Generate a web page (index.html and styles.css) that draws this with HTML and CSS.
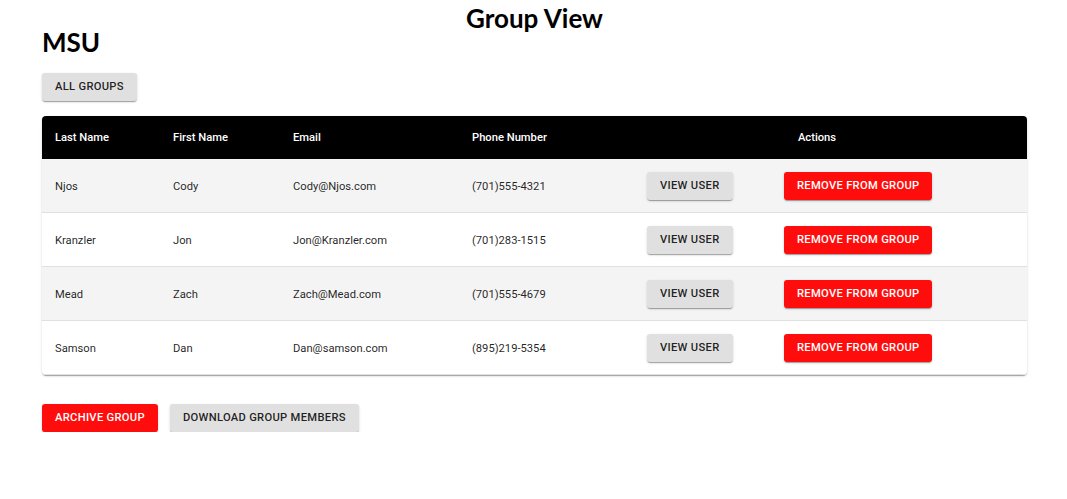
FILE: index.html
```html
<!DOCTYPE html>
<html lang="en">
<head>
<meta charset="utf-8">
<title>Group View</title>
<link rel="stylesheet" href="styles.css">
</head>
<body>
<div class="page">
  <h1 class="page-title">Group View</h1>
  <h1 class="group-name">MSU</h1>
  <div class="top-actions">
    <button class="btn btn-grey">All Groups</button>
  </div>
  <div class="paper">
    <table class="members">
      <colgroup>
        <col class="c-last">
        <col class="c-first">
        <col class="c-email">
        <col class="c-phone">
        <col class="c-view">
        <col class="c-remove">
      </colgroup>
      <thead>
        <tr>
          <th>Last Name</th>
          <th>First Name</th>
          <th>Email</th>
          <th>Phone Number</th>
          <th colspan="2" class="th-actions">Actions</th>
        </tr>
      </thead>
      <tbody>
        <tr>
          <td>Njos</td><td>Cody</td><td>Cody@Njos.com</td><td>(701)555-4321</td>
          <td><button class="btn btn-grey">View User</button></td>
          <td><button class="btn btn-red">Remove From Group</button></td>
        </tr>
        <tr>
          <td>Kranzler</td><td>Jon</td><td>Jon@Kranzler.com</td><td>(701)283-1515</td>
          <td><button class="btn btn-grey">View User</button></td>
          <td><button class="btn btn-red">Remove From Group</button></td>
        </tr>
        <tr>
          <td>Mead</td><td>Zach</td><td>Zach@Mead.com</td><td>(701)555-4679</td>
          <td><button class="btn btn-grey">View User</button></td>
          <td><button class="btn btn-red">Remove From Group</button></td>
        </tr>
        <tr>
          <td>Samson</td><td>Dan</td><td>Dan@samson.com</td><td>(895)219-5354</td>
          <td><button class="btn btn-grey">View User</button></td>
          <td><button class="btn btn-red">Remove From Group</button></td>
        </tr>
      </tbody>
    </table>
  </div>
  <div class="bottom-actions">
    <button class="btn btn-red">Archive Group</button>
    <button class="btn btn-grey">Download Group Members</button>
  </div>
</div>
</body>
</html>
```
FILE: styles.css
```css
html, body {
  margin: 0;
  padding: 0;
  background: #ffffff;
}

body {
  font-family: Roboto, "Liberation Sans", sans-serif;
  color: rgba(0, 0, 0, 0.87);
}

.page {
  padding: 0 40px 0 42px;
}

.page-title,
.group-name {
  font-family: Lato, "Open Sans", sans-serif;
  font-weight: 700;
  font-size: 26px;
  line-height: 24px;
  margin: 0;
  color: #000;
}

.page-title {
  text-align: center;
  padding-top: 6px;
}

.group-name {
  padding-top: 0;
}

.top-actions {
  margin-top: 19px;
}

.btn {
  font-family: Roboto, "Liberation Sans", sans-serif;
  font-weight: 500;
  font-size: 11.2px;
  letter-spacing: 0.3px;
  text-transform: uppercase;
  line-height: 20px;
  height: 28px;
  padding: 4px 13px;
  border: 0;
  border-radius: 3px;
  cursor: pointer;
  box-shadow: 0 2px 1px -1px rgba(0,0,0,0.2), 0 1px 1px 0 rgba(0,0,0,0.14), 0 1px 3px 0 rgba(0,0,0,0.12);
}

.btn-grey {
  background: #e0e0e0;
  color: rgba(0, 0, 0, 0.87);
}

.btn-red {
  background: #ff0d0d;
  color: #ffffff;
}

.paper {
  margin-top: 15px;
  border-radius: 4px;
  overflow: hidden;
  background: #fff;
  box-shadow: 0 2px 1px -1px rgba(0,0,0,0.2), 0 1px 1px 0 rgba(0,0,0,0.14), 0 1px 3px 0 rgba(0,0,0,0.12);
}

.members {
  width: 100%;
  border-collapse: collapse;
  table-layout: fixed;
  font-size: 11.2px;
}

.c-last { width: 118px; }
.c-first { width: 120px; }
.c-email { width: 179px; }
.c-phone { width: 175px; }
.c-view { width: 137px; }
.c-remove { width: auto; }

.members th {
  background: #000;
  color: #fff;
  font-weight: 500;
  text-align: left;
  padding: 13px 13px;
  line-height: 17px;
}

.members th.th-actions {
  text-align: center;
  padding-right: 40px;
}

.members td {
  padding: 13px 13px 12px;
  line-height: 17px;
  border-bottom: 1px solid #e0e0e0;
  height: 28px;
  box-sizing: content-box;
}

.members tbody tr:nth-child(odd) td {
  background: #f4f4f4;
}

.bottom-actions {
  margin-top: 29px;
  display: flex;
  gap: 12px;
}
```
